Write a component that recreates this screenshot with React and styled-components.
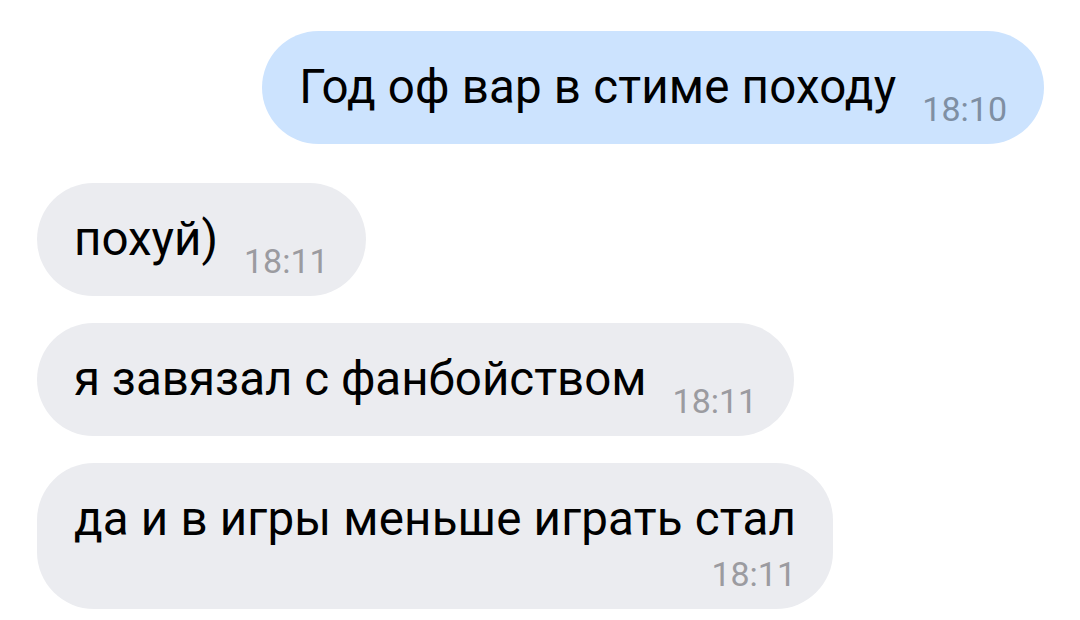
import { createGlobalStyle, styled } from "styled-components";

const GlobalStyle = createGlobalStyle`
  html, body {
    margin: 0;
    padding: 0;
    background: #ffffff;
  }
  body {
    font-family: Roboto, "Noto Sans", "Liberation Sans", sans-serif;
  }
`;

const Chat = styled.div`
  display: flex;
  flex-direction: column;
  padding: 31px 36px 0 37px;
`;

const Row = styled.div`
  display: flex;
  justify-content: ${(p) => (p.$out ? "flex-end" : "flex-start")};
  margin-top: ${(p) => p.$gap || 0}px;
`;

const Bubble = styled.div`
  display: flex;
  flex-direction: ${(p) => (p.$stacked ? "column" : "row")};
  align-items: flex-end;
  padding: 29px 37px 14px 37px;
  border-radius: 57px;
  background: ${(p) => (p.$out ? "#cce3fe" : "#ebecf0")};
`;

const Text = styled.span`
  align-self: ${(p) => (p.$stacked ? "flex-start" : "auto")};
  font-size: 47.5px;
  line-height: 54px;
  color: #000000;
  white-space: nowrap;
  margin-bottom: ${(p) => (p.$stacked ? 8 : 16)}px;
  font-stretch: ${(p) => (p.$condensed ? "97%" : "100%")};
  letter-spacing: ${(p) => (p.$condensed ? "0.18px" : "0")};
`;

const Time = styled.span`
  font-size: 34px;
  line-height: 41px;
  margin-left: ${(p) => (p.$stacked ? 0 : 26)}px;
  color: ${(p) => (p.$out ? "#7f8fa3" : "#9b9ba0")};
  white-space: nowrap;
`;

const messages = [
  { text: "Год оф вар в стиме походу", time: "18:10", out: true, condensed: true },
  { text: "похуй)", time: "18:11", gap: 39 },
  { text: "я завязал с фанбойством", time: "18:11", gap: 27 },
  { text: "да и в игры меньше играть стал", time: "18:11", gap: 27, stacked: true, condensed: true },
];

export default function App() {
  return (
    <>
      <GlobalStyle />
      <Chat>
        {messages.map((m, i) => (
          <Row key={i} $out={m.out} $gap={m.gap}>
            <Bubble $out={m.out} $stacked={m.stacked}>
              <Text $stacked={m.stacked} $condensed={m.condensed}>{m.text}</Text>
              <Time $out={m.out} $stacked={m.stacked}>{m.time}</Time>
            </Bubble>
          </Row>
        ))}
      </Chat>
    </>
  );
}
